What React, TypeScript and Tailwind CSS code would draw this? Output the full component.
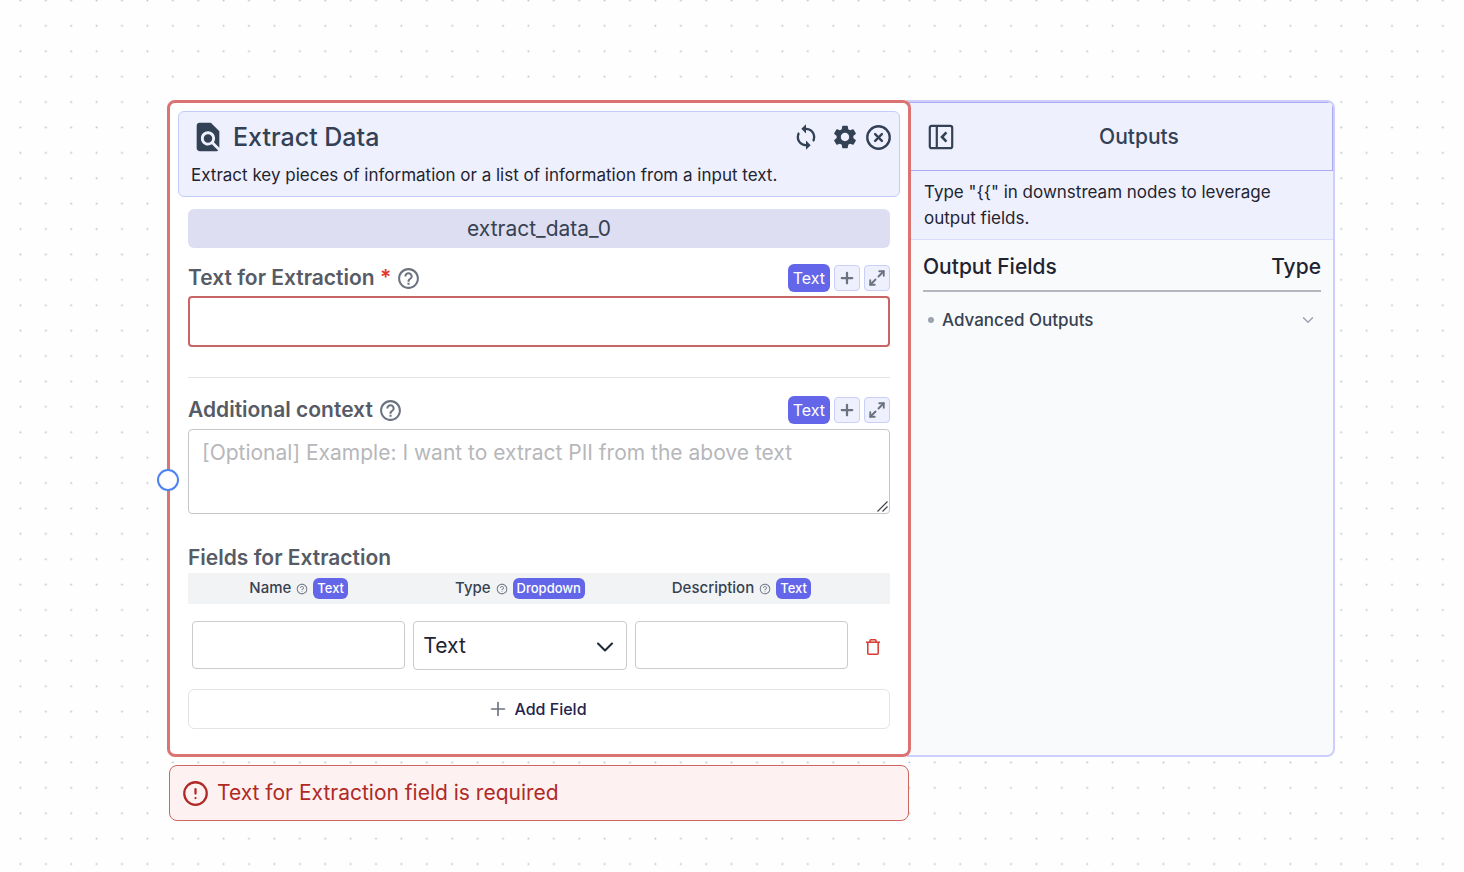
import { type ReactNode } from "react";
import { MdFindInPage, MdHelpOutline, MdSettings, MdSync } from "react-icons/md";
import { AiOutlineQuestionCircle } from "react-icons/ai";
import { ChevronDown, CircleAlert, CircleX, Maximize2, Plus } from "lucide-react";

function DotGrid() {
  return (
    <svg className="absolute inset-0 h-full w-full" aria-hidden="true">
      <defs>
        <pattern id="dots" x="18" y="-2" width="25.4" height="25.4" patternUnits="userSpaceOnUse">
          <circle cx="2.4" cy="2.4" r="1" fill="#bcc5d3" />
        </pattern>
      </defs>
      <rect width="100%" height="100%" fill="url(#dots)" />
    </svg>
  );
}

function CollapseIcon() {
  return (
    <svg width="26" height="26" viewBox="0 0 26 26" fill="none" stroke="currentColor" strokeWidth="2.2" aria-hidden="true">
      <rect x="1.8" y="1.8" width="22.4" height="22.4" rx="2" />
      <path d="M8.8 1.8v22.4" />
      <path d="M18.4 8.4L14 13l4.4 4.6" strokeWidth="2.6" />
    </svg>
  );
}

function TrashIcon() {
  return (
    <svg width="16" height="18" viewBox="0 0 16 18" fill="none" stroke="currentColor" strokeWidth="1.5" strokeLinejoin="round" aria-hidden="true">
      <path d="M1 4.2h14" />
      <path d="M5 4V2.6Q5 1.7 5.9 1.7h4.2Q11 1.7 11 2.6V4" />
      <path d="M2.8 4.2V15.3Q2.8 16.3 3.8 16.3h8.4Q13.2 16.3 13.2 15.3V4.2" />
    </svg>
  );
}

function ResizeGrip() {
  return (
    <svg className="pointer-events-none absolute right-[2px] bottom-[2px]" width="11" height="11" viewBox="0 0 11 11" stroke="#3f3f46" strokeWidth="1.2" aria-hidden="true">
      <path d="M0.5 10.5L10.5 0.5M5.5 10.5L10.5 5.5" />
    </svg>
  );
}

function FieldTools({ field }: { field: string }) {
  return (
    <div className="flex items-center gap-1">
      <span className="flex h-7 items-center rounded-md bg-[#6466e9] px-[5px] text-[16px] text-white">Text</span>
      <button type="button" aria-label={`Insert variable in ${field}`} className="flex size-[26px] items-center justify-center rounded border border-[#c9cff9] bg-[#eef0fe] text-[#6b7280]">
        <Plus size={18} strokeWidth={3} />
      </button>
      <button type="button" aria-label={`Expand ${field}`} className="flex size-[26px] items-center justify-center rounded border border-[#c9cff9] bg-[#eef0fe] text-[#6b7280]">
        <Maximize2 size={18} strokeWidth={2.5} />
      </button>
    </div>
  );
}

function ColumnHead({ label, kind }: { label: string; kind: string }) {
  return (
    <th scope="col" className="p-0 font-medium">
      <span className="flex items-center justify-center gap-[5px]">
        {label}
        <AiOutlineQuestionCircle size={12} className="text-[#6b7280]" />
        <span className="flex h-[21px] items-center rounded-md bg-[#6466e9] px-1 text-[13px] text-white">{kind}</span>
      </span>
    </th>
  );
}

function FieldLabel({ id, children }: { id: string; children: ReactNode }) {
  return (
    <div className="flex items-center gap-[5px]">
      <label htmlFor={id} className="text-[21px] leading-7 font-semibold text-[#565b66]">
        {children}
      </label>
      <MdHelpOutline size={25} className="text-[#6b7280]" />
    </div>
  );
}

function NodeCard() {
  return (
    <section className="relative z-10 rounded-lg border-3 border-[#dc7373] bg-white px-2 pt-2 pb-[25px]">
      <span className="absolute top-[366px] left-[-13px] size-[22px] rounded-full border-2 border-[#4f83ee] bg-white" />

      <header className="h-[86px] rounded-md border border-[#c3cbfa] bg-[#eef0fe] px-3 pt-2">
        <div className="flex items-center text-[#334155]">
          <MdFindInPage size={34} />
          <h1 className="ml-2 flex-1 text-[25px] leading-[34px] font-medium">Extract Data</h1>
          <button type="button" aria-label="Refresh" className="mr-[11px]"><MdSync size={28} /></button>
          <button type="button" aria-label="Settings" className="mr-[6px]"><MdSettings size={28} /></button>
          <button type="button" aria-label="Close" className="-mr-[5px]"><CircleX size={27} strokeWidth={2.1} /></button>
        </div>
        <p className="mt-[9px] text-[17px] leading-6 text-[#1f2430]">Extract key pieces of information or a list of information from a input text.</p>
      </header>

      <div className="px-[10px]">
        <div className="mt-3 flex h-[39px] items-center justify-center rounded-md bg-[#dddef2] text-[21px] text-[#374151]">extract_data_0</div>

        <div className="mt-4 flex items-center justify-between">
          <FieldLabel id="source">Text for Extraction <span className="text-[#e5352b]">*</span></FieldLabel>
          <FieldTools field="Text for Extraction" />
        </div>
        <input id="source" type="text" required className="mt-1 block h-[51px] w-full rounded border-2 border-[#c96565] bg-white px-3 text-[21px] outline-none" />

        <hr className="mt-[30px] border-[#e2e4e8]" />

        <div className="mt-[18px] flex items-center justify-between">
          <FieldLabel id="context">Additional context</FieldLabel>
          <FieldTools field="Additional context" />
        </div>
        <div className="relative mt-[5px]">
          <textarea id="context" placeholder="[Optional] Example: I want to extract PII from the above text" className="block h-[85px] w-full resize-none overflow-hidden rounded border border-[#c4c6ca] bg-white px-[13px] pt-[7px] text-[21px] leading-8 placeholder:text-[#b6b7ba] outline-none" />
          <ResizeGrip />
        </div>

        <h2 className="mt-[30px] text-[21px] leading-7 font-semibold text-[#565b66]">Fields for Extraction</h2>
        <table className="mt-px w-full table-fixed border-collapse">
          <colgroup>
            <col />
            <col />
            <col />
            <col className="w-[38px]" />
          </colgroup>
          <thead>
            <tr className="h-[31px] bg-[#f2f3f5] text-[15px] text-[#374151]">
              <ColumnHead label="Name" kind="Text" />
              <ColumnHead label="Type" kind="Dropdown" />
              <ColumnHead label="Description" kind="Text" />
              <td />
            </tr>
          </thead>
          <tbody>
            <tr>
              <td className="px-1 pt-[17px] align-top">
                <input aria-label="Name" type="text" className="block h-12 w-full rounded border border-[#c9cbcf] bg-white px-2 text-[21px]" />
              </td>
              <td className="px-1 pt-[17px] align-top">
                <div className="relative">
                  <select aria-label="Type" className="block h-[49px] w-full appearance-none rounded border border-[#c9cbcf] bg-white px-[9px] pt-px text-[21px] text-[#1f2430]">
                    <option>Text</option>
                  </select>
                  <ChevronDown size={28} strokeWidth={1.8} className="pointer-events-none absolute top-3 right-2 text-[#1f2937]" />
                </div>
              </td>
              <td className="px-1 pt-[17px] align-top">
                <input aria-label="Description" type="text" className="block h-12 w-full rounded border border-[#c9cbcf] bg-white px-2 text-[21px]" />
              </td>
              <td className="pt-5 pl-1">
                <button type="button" aria-label="Delete field" className="mx-auto block text-[#d63a30]"><TrashIcon /></button>
              </td>
            </tr>
          </tbody>
        </table>
        <button type="button" className="mt-[19px] flex h-10 w-full items-center justify-center gap-[5px] rounded-md border border-[#e3e4e6] bg-white text-[16px] font-medium text-[#26244f]">
          <Plus size={22} strokeWidth={1.8} className="-ml-1 text-[#6b7280]" />
          Add Field
        </button>
      </div>
    </section>
  );
}

function OutputsPanel() {
  return (
    <aside className="-ml-1 flex flex-col overflow-hidden rounded-r-lg border-2 border-[#cdcefa] bg-[#f9fafc] pl-[3px]">
      <header className="-ml-[3px] flex h-[69px] items-center border border-[#aaabf3] bg-[#eef0fe] pr-2 pl-[18px] text-[#334155]">
        <button type="button" aria-label="Collapse outputs"><CollapseIcon /></button>
        <h2 className="flex-1 text-center text-[21px] font-medium">Outputs</h2>
      </header>
      <p className="-ml-[3px] border-b border-[#d8dbfa] bg-[#eef0fe] py-2 pr-10 pl-[15px] text-[17px] leading-[26px] text-[#1f2430]">
        {'Type "{{" in downstream nodes to leverage output fields.'}
      </p>
      <div className="mr-3 ml-[11px] flex h-[52px] items-center justify-between border-b-2 border-[#b4b7bf] pt-1 text-[21px] font-medium text-[#1f2430]">
        <h3>Output Fields</h3>
        <span>Type</span>
      </div>
      <button type="button" className="mx-3 mt-4 flex items-center px-1 text-[17px] leading-6 font-medium text-[#374151]">
        <span className="mr-2 size-[6px] rounded-full bg-[#9ca3af]" />
        <span className="flex-1 text-left">Advanced Outputs</span>
        <ChevronDown size={18} strokeWidth={2} className="text-[#9ca3af]" />
      </button>
    </aside>
  );
}

export default function App() {
  return (
    <main className="relative min-h-screen bg-[#fefefe] pt-[100px] pr-[129px] pb-12 pl-[167px] font-['Inter',sans-serif]">
      <DotGrid />
      <div className="relative grid grid-cols-[744fr_424fr] gap-y-2">
        <NodeCard />
        <OutputsPanel />
        <div role="alert" className="mx-[2px] flex h-14 items-center gap-2 rounded-lg border border-[#cc6660] bg-[#fdf1f1] px-3 text-[21px] text-[#b02a25]">
          <CircleAlert size={27} strokeWidth={2} />
          Text for Extraction field is required
        </div>
      </div>
    </main>
  );
}
